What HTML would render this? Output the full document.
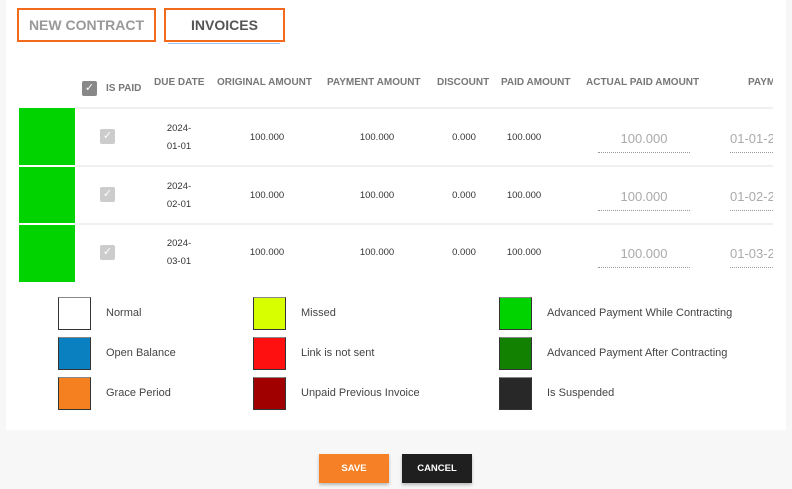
<!DOCTYPE html>
<html><head><style>
*{margin:0;padding:0;box-sizing:border-box}
body{width:792px;height:489px;background:#f7f7f7;font-family:"Liberation Sans",sans-serif;position:relative;overflow:hidden}
.a{position:absolute}
.card{left:6px;top:0;width:780px;height:430px;background:#fff}
.tab{border:2px solid #f26a1b;font-weight:bold;font-size:14px;display:flex;align-items:center;justify-content:center}
.h{font-size:10px;color:#777;font-weight:bold;white-space:nowrap}
.c{font-size:9.5px;color:#333;text-align:center;white-space:nowrap}
.line{left:75px;width:698px;height:2px;background:#f0f0f0}
.g{left:19px;width:56px;background:#00d300}
.cb{width:15px;height:15px;background:#ccc;border-radius:2px;color:#fff;font-size:11px;text-align:center;line-height:15px}
.in{font-size:13px;color:#aaa;border-bottom:1px dotted #999;text-align:center;white-space:nowrap}
.sw{width:33px;height:33px;border:1.5px solid #333;border-top-color:#888}
.lb{font-size:11px;color:#444}
.btn{top:454px;height:29px;width:70px;color:#fff;font-size:9.5px;font-weight:bold;display:flex;align-items:center;justify-content:center;box-shadow:0 2px 3px rgba(0,0,0,.25)}
.d{line-height:18px;white-space:normal}
</style></head><body>
<div class="a card"></div>
<div class="a tab" style="left:17px;top:8px;width:139px;height:34px;color:#999">NEW CONTRACT</div>
<div class="a tab" style="left:164px;top:8px;width:121px;height:34px;color:#555">INVOICES</div>
<div class="a" style="left:168px;top:43px;width:112px;height:1px;background:#9cc3f5"></div>

<div class="a cb" style="left:82px;top:81px;background:#888">✓</div>
<div class="a h" style="left:106px;top:83px">IS PAID</div>
<div class="a h" style="left:154px;top:77px">DUE DATE</div>
<div class="a h" style="left:217px;top:77px">ORIGINAL AMOUNT</div>
<div class="a h" style="left:327px;top:77px">PAYMENT AMOUNT</div>
<div class="a h" style="left:437px;top:77px">DISCOUNT</div>
<div class="a h" style="left:501px;top:77px">PAID AMOUNT</div>
<div class="a h" style="left:586px;top:77px">ACTUAL PAID AMOUNT</div>
<div class="a h" style="left:748px;top:77px;width:25px;overflow:hidden">PAYMENT</div>

<div class="a line" style="top:107px"></div>
<div class="a line" style="top:165px"></div>
<div class="a line" style="top:223px"></div>
<div class="a g" style="top:108px;height:57px"></div>
<div class="a g" style="top:167px;height:56px"></div>
<div class="a g" style="top:225px;height:57px"></div>

<div class="a cb" style="left:100px;top:129px">✓</div>
<div class="a c d" style="left:160px;top:120px;width:38px">2024-<br>01-01</div>
<div class="a c" style="left:237px;top:132px;width:60px">100.000</div>
<div class="a c" style="left:347px;top:132px;width:60px">100.000</div>
<div class="a c" style="left:444px;top:132px;width:40px">0.000</div>
<div class="a c" style="left:504px;top:132px;width:40px">100.000</div>
<div class="a in" style="left:598px;top:131px;width:92px;height:22px">100.000</div>
<div class="a in" style="left:730px;top:131px;width:43px;height:22px;overflow:hidden;text-align:left">01-01-2024</div>

<div class="a cb" style="left:100px;top:187px">✓</div>
<div class="a c d" style="left:160px;top:178px;width:38px">2024-<br>02-01</div>
<div class="a c" style="left:237px;top:190px;width:60px">100.000</div>
<div class="a c" style="left:347px;top:190px;width:60px">100.000</div>
<div class="a c" style="left:444px;top:190px;width:40px">0.000</div>
<div class="a c" style="left:504px;top:190px;width:40px">100.000</div>
<div class="a in" style="left:598px;top:189px;width:92px;height:22px">100.000</div>
<div class="a in" style="left:730px;top:189px;width:43px;height:22px;overflow:hidden;text-align:left">01-02-2024</div>

<div class="a cb" style="left:100px;top:245px">✓</div>
<div class="a c d" style="left:160px;top:235px;width:38px">2024-<br>03-01</div>
<div class="a c" style="left:237px;top:247px;width:60px">100.000</div>
<div class="a c" style="left:347px;top:247px;width:60px">100.000</div>
<div class="a c" style="left:444px;top:247px;width:40px">0.000</div>
<div class="a c" style="left:504px;top:247px;width:40px">100.000</div>
<div class="a in" style="left:598px;top:246px;width:92px;height:22px">100.000</div>
<div class="a in" style="left:730px;top:246px;width:43px;height:22px;overflow:hidden;text-align:left">01-03-2024</div>

<div class="a sw" style="left:58px;top:297px;background:#fff"></div><div class="a lb" style="left:106px;top:307px">Normal</div>
<div class="a sw" style="left:58px;top:337px;background:#0a80c0"></div><div class="a lb" style="left:106px;top:347px">Open Balance</div>
<div class="a sw" style="left:58px;top:377px;background:#f58020"></div><div class="a lb" style="left:106px;top:387px">Grace Period</div>
<div class="a sw" style="left:253px;top:297px;background:#d8ff00"></div><div class="a lb" style="left:301px;top:307px">Missed</div>
<div class="a sw" style="left:253px;top:337px;background:#ff1010"></div><div class="a lb" style="left:301px;top:347px">Link is not sent</div>
<div class="a sw" style="left:253px;top:377px;background:#a00000"></div><div class="a lb" style="left:301px;top:387px">Unpaid Previous Invoice</div>
<div class="a sw" style="left:499px;top:297px;background:#00d300"></div><div class="a lb" style="left:547px;top:307px">Advanced Payment While Contracting</div>
<div class="a sw" style="left:499px;top:337px;background:#128000"></div><div class="a lb" style="left:547px;top:347px">Advanced Payment After Contracting</div>
<div class="a sw" style="left:499px;top:377px;background:#282828"></div><div class="a lb" style="left:547px;top:387px">Is Suspended</div>

<div class="a btn" style="left:319px;background:#f58025">SAVE</div>
<div class="a btn" style="left:402px;background:#1f1f1f">CANCEL</div>
</body></html>
